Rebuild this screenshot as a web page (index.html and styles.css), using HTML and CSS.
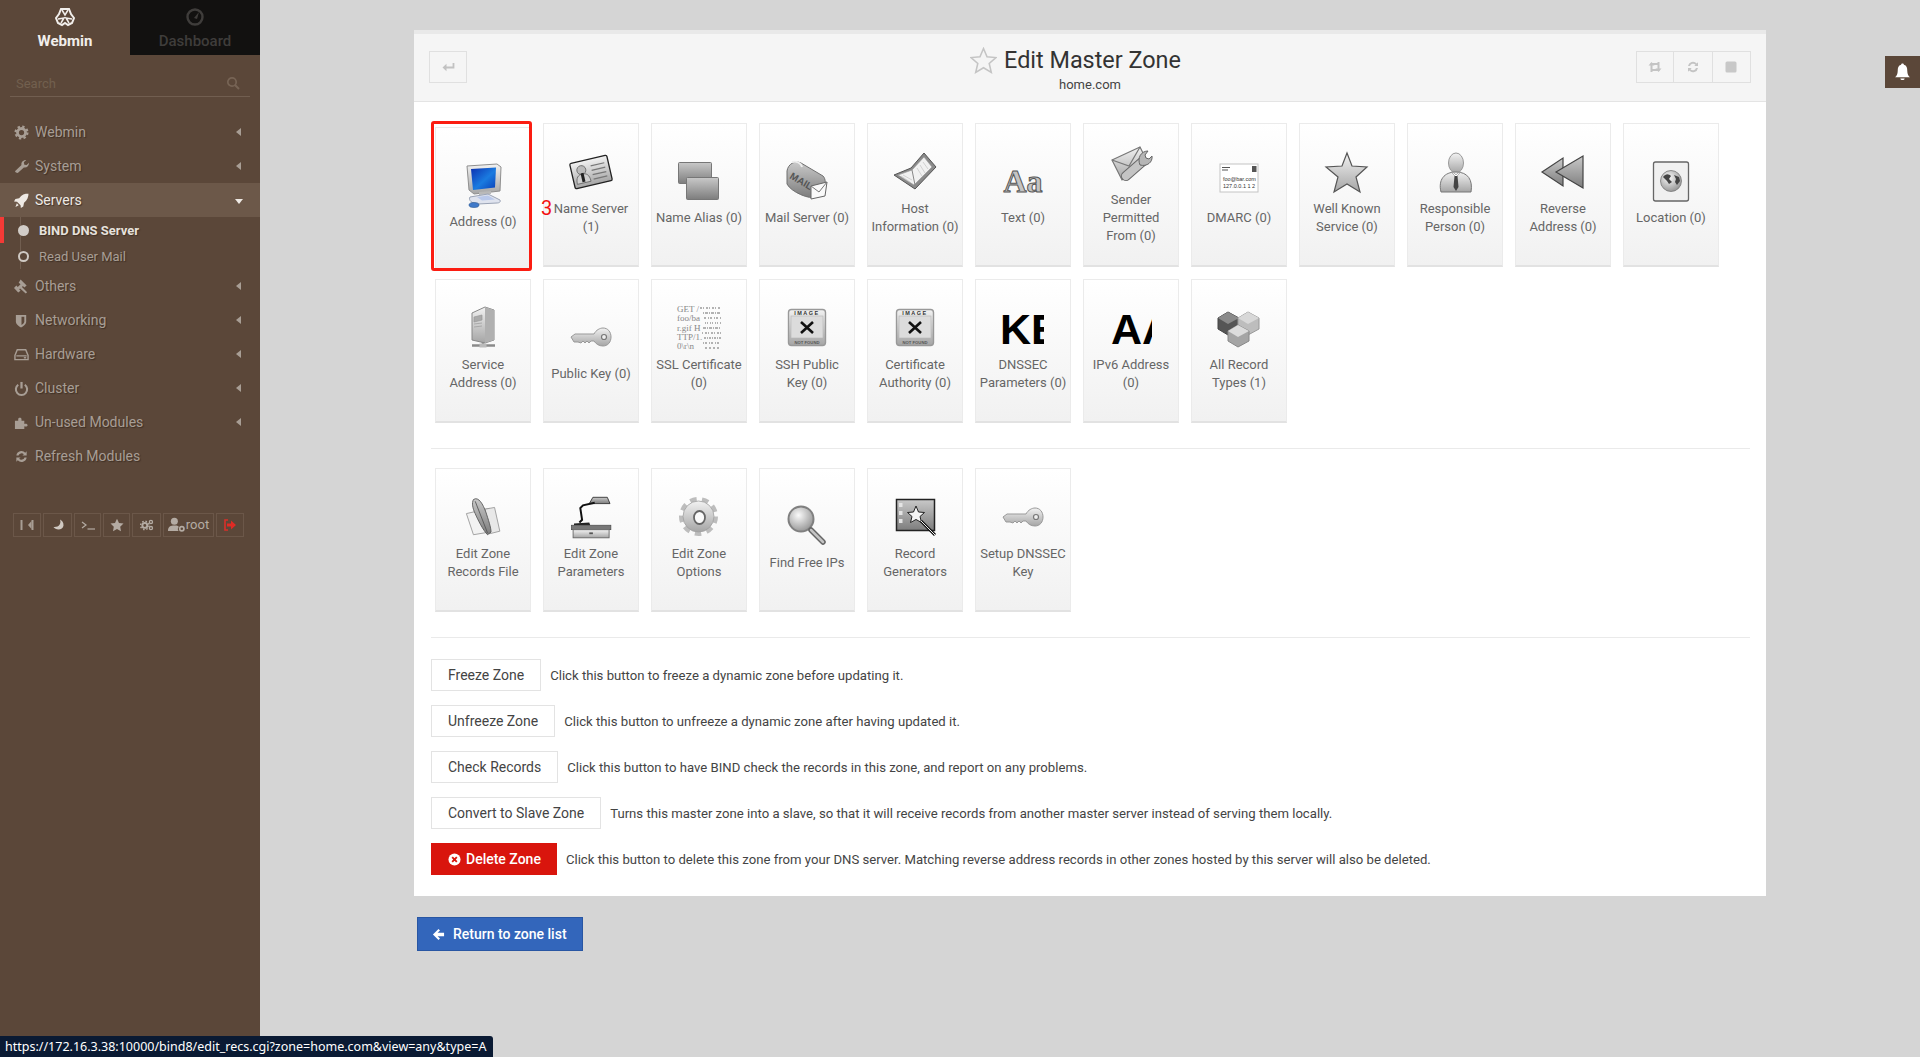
FILE: index.html
```html
<!DOCTYPE html>
<html lang="en">
<head>
<meta charset="utf-8">
<title>Edit Master Zone</title>
<link rel="stylesheet" href="styles.css">
</head>
<body>
<svg class="defs" aria-hidden="true">
  <defs>
    <linearGradient id="gl" x1="0" y1="0" x2="0" y2="1"><stop offset="0" stop-color="#f2f2f2"/><stop offset="1" stop-color="#a5a5a5"/></linearGradient>
    <linearGradient id="gm" x1="0" y1="0" x2="0" y2="1"><stop offset="0" stop-color="#c9c9c9"/><stop offset="1" stop-color="#7d7d7d"/></linearGradient>
    <linearGradient id="gd" x1="0" y1="0" x2="0" y2="1"><stop offset="0" stop-color="#777"/><stop offset="1" stop-color="#333"/></linearGradient>
    <linearGradient id="gb" x1="0" y1="0" x2="1" y2="1"><stop offset="0" stop-color="#0c2fb0"/><stop offset=".55" stop-color="#1a7be0"/><stop offset="1" stop-color="#0a3fb8"/></linearGradient>
    <radialGradient id="gg" cx=".4" cy=".35" r=".75"><stop offset="0" stop-color="#fafafa"/><stop offset="1" stop-color="#8a8a8a"/></radialGradient>
    <clipPath id="clip41"><rect x="0" y="0" width="45" height="48"/></clipPath>
    <symbol id="i-key" viewBox="0 0 48 48"><path d="M4 24l4-3h19c2-4 6-6 9-6 5 0 8 4 8 9s-3 9-8 9c-4 0-7-2-9-5h-3l-2 2-2-2-2 2-2-2-2 2-3-1-4 0z" fill="url(#gl)" stroke="#999"/><circle cx="37" cy="24" r="2.500" fill="#eee" stroke="#777" stroke-width="1.200"/></symbol>
    <symbol id="i-nf" viewBox="0 0 48 48"><rect x="5.500" y="5.500" width="37" height="36" rx="3" fill="url(#gl)" stroke="#999" stroke-width="1.400"/><rect x="8" y="12" width="32" height="22" fill="#dcdcdc" stroke="#b5b5b5" stroke-width=".6"/><text class="nft nft-top" x="24" y="10.500">IMAGE</text><path d="M18 18l12 11M30 18l-12 11" stroke="#111" stroke-width="2.600"/><text class="nft" x="24" y="39.500">NOT FOUND</text></symbol>
  </defs>
</svg>
<div class="layout">
  <aside class="sidebar">
    <div class="tabs">
      <div class="tab tab-on">
        <svg class="tab-ico" viewBox="0 0 20 20"><path d="M6 2h8l2 5 3 4-2 5-4 2-3-2-3 2-4-2-2-5 3-4z" fill="none" stroke="#f1eeeb" stroke-width="2"/><path d="M7 3l3 5 3-5M3 12l6-1-3 5M17 12l-6-1 3 5" fill="none" stroke="#f1eeeb" stroke-width="1.500"/></svg>
        <span>Webmin</span>
      </div>
      <div class="tab tab-off">
        <svg class="tab-ico" viewBox="0 0 20 20"><circle cx="10" cy="10" r="7.500" fill="none" stroke="#3f3d3b" stroke-width="2.400"/><path d="M9 11l5-6-2 7z" fill="#3f3d3b"/></svg>
        <span>Dashboard</span>
      </div>
    </div>
    <div class="search"><span>Search</span><svg class="search-ico" viewBox="0 0 14 14"><circle cx="6" cy="6" r="4.200" fill="none" stroke="#776455" stroke-width="1.700"/><path d="M9 9l4 4" stroke="#776455" stroke-width="2"/></svg></div>
    <nav class="menu">
      <div class="mi"><svg class="mi-ico" viewBox="0 0 16 16"><circle cx="8" cy="8" r="4.300" fill="none" stroke="#a89e95" stroke-width="3"/><circle cx="8" cy="8" r="6.300" fill="none" stroke="#a89e95" stroke-width="2.400" stroke-dasharray="2.500 2.450"/></svg><span class="mi-t">Webmin</span><i class="arr"></i></div>
      <div class="mi"><svg class="mi-ico" viewBox="0 0 16 16"><path d="M2 14.500l-1-1.500 7-6.500c-.7-3 1.500-5.500 5-5.500l-2.500 2.500.5 2.500 2.500.5L16 4c0 3.500-2.500 5.700-5.500 5l-6.500 6z" fill="#a89e95"/></svg><span class="mi-t">System</span><i class="arr"></i></div>
      <div class="mi mi-open"><svg class="mi-ico" viewBox="0 0 16 16"><path d="M15.500.5c-4 0-7.500 1.500-10 5l-4 .8L0 9l3.200.2L7 13l.3 3 2.600-1.600.8-4c3.400-2.500 4.900-6.400 4.800-10.400z" fill="#eee9e4"/><path d="M3 11l2 2-3.500 2z" fill="#eee9e4"/></svg><span class="mi-t">Servers</span><i class="arr-d"></i></div>
      <div class="sub">
        <div class="si si-on"><i class="dot-on"></i><span>BIND DNS Server</span></div>
        <div class="si"><i class="dot"></i><span>Read User Mail</span></div>
      </div>
      <div class="mi"><svg class="mi-ico" viewBox="0 0 16 16"><path d="M7 .5l6.500 6.500-2.500 2-1.500-1.500-1 1 5.500 5.500-1.500 1.500L6.500 10l-1 1L7 12.500l-2.500 2L0 9.500 2.500 7l1.500 1.500 3-3L5 4z" fill="#a89e95"/></svg><span class="mi-t">Others</span><i class="arr"></i></div>
      <div class="mi"><svg class="mi-ico" viewBox="0 0 16 16"><path d="M2 2h11v7c0 3-3 5-5.500 6.500C5 14 2 12 2 9z" fill="#a89e95"/><path d="M8 4h3v5c0 1.500-1.500 2.800-3 3.700z" fill="#5b4739"/></svg><span class="mi-t">Networking</span><i class="arr"></i></div>
      <div class="mi"><svg class="mi-ico" viewBox="0 0 16 16"><path d="M3.500 3h9l2.500 6v4.500H1V9z M2.500 9.500h11" fill="none" stroke="#a89e95" stroke-width="1.500"/><path d="M10.500 11.500h2.500" stroke="#a89e95" stroke-width="1.500"/></svg><span class="mi-t">Hardware</span><i class="arr"></i></div>
      <div class="mi"><svg class="mi-ico" viewBox="0 0 16 16"><path d="M4.500 4a6 6 0 1 0 7 0" fill="none" stroke="#a89e95" stroke-width="2.200"/><path d="M8 1v7" stroke="#a89e95" stroke-width="2.400"/></svg><span class="mi-t">Cluster</span><i class="arr"></i></div>
      <div class="mi"><svg class="mi-ico" viewBox="0 0 16 16"><path d="M1 6h3.500V4.500c0-2 3.500-2 3.500 0V6h3v3.500c2-.8 3.500.2 3.500 1.300s-1.500 2-3.500 1.200V15H1z" fill="#a89e95"/></svg><span class="mi-t">Un-used Modules</span><i class="arr"></i></div>
      <div class="mi"><svg class="mi-ico" viewBox="0 0 16 16"><path d="M2.500 7a5.500 5.500 0 0 1 9.500-3l1.500-1.500V7H9l1.500-1.500A3.500 3.500 0 0 0 4.800 7zM13.500 9a5.500 5.500 0 0 1-9.500 3l-1.500 1.500V9H7l-1.500 1.500A3.500 3.500 0 0 0 11.200 9z" fill="#a89e95"/></svg><span class="mi-t">Refresh Modules</span></div>
    </nav>
    <div class="tools">
      <div class="tool"><svg class="tool-ico" viewBox="0 0 14 14"><path d="M1.500 2v10" stroke="#a89e95" stroke-width="2"/><path d="M8 7l3.500-4v8z" fill="#a89e95"/><path d="M12.500 2v10" stroke="#a89e95" stroke-width="2"/></svg></div>
      <div class="tool"><svg class="tool-ico" viewBox="0 0 14 14"><path d="M9 1.500c1.500 4-1 8-6.500 7.500 2 3.500 9.500 3.500 10-1.500C12.800 4.500 11 2.500 9 1.500z" fill="#d0c9c2"/></svg></div>
      <div class="tool"><svg class="tool-ico" viewBox="0 0 14 14"><path d="M1 4l4 3-4 3" fill="none" stroke="#b4aba3" stroke-width="1.200"/><path d="M6.500 11H14" stroke="#b4aba3" stroke-width="1.200"/></svg></div>
      <div class="tool"><svg class="tool-ico" viewBox="0 0 14 14"><path d="M7 .8l2 4.200 4.500.6-3.300 3.100.8 4.500L7 11l-4 2.200.8-4.500L.5 5.600 5 5z" fill="#b4aba3"/></svg></div>
      <div class="tool"><svg class="tool-ico" viewBox="0 0 16 14"><circle cx="5.500" cy="7.500" r="2.800" fill="none" stroke="#b4aba3" stroke-width="2.200"/><circle cx="5.500" cy="7.500" r="4.800" fill="none" stroke="#b4aba3" stroke-width="1.600" stroke-dasharray="1.800 2"/><circle cx="12.500" cy="3.500" r="1.800" fill="none" stroke="#b4aba3" stroke-width="1.500"/><circle cx="12.500" cy="10.500" r="1.800" fill="none" stroke="#b4aba3" stroke-width="1.500"/></svg></div>
      <div class="tool tool-user"><svg class="tool-ico tool-ico-u" viewBox="0 0 16 14"><circle cx="6" cy="4" r="3.300" fill="#b4aba3"/><path d="M0 13c0-4 2.500-5 6-5s4 .5 4 1.500c-1 1-1 2.500 0 3.500z" fill="#b4aba3"/><circle cx="13" cy="11" r="2" fill="none" stroke="#b4aba3" stroke-width="1.600"/></svg><span>root</span></div>
      <div class="tool"><svg class="tool-ico" viewBox="0 0 14 14"><path d="M5 2H2v10h3" fill="none" stroke="#d8302a" stroke-width="1.600"/><path d="M4 5.500h4V2.500L13 7l-5 4.500v-3H4z" fill="#e02a24"/></svg></div>
    </div>
  </aside>

  <main class="main">
    <section class="card">
      <header class="head">
        <div class="hbtns"><div class="hb hb-back"><svg class="hb-ico" viewBox="0 0 14 14"><path d="M12.500 3v4.500H3" fill="none" stroke="#c2c2c2" stroke-width="1.800"/><path d="M5.500 3.800L1.500 7.500l4 3.700z" fill="#c2c2c2"/></svg></div></div>
        <div class="htitle">
          <h1><svg class="star" viewBox="0 0 26 26"><path d="M13 1.500l3.400 8 8.600.7-6.500 5.700 2 8.500L13 20l-7.500 4.400 2-8.500L1 10.200l8.600-.7z" fill="#f4f4f4" stroke="#c4c4c4" stroke-width="1.500"/></svg>Edit Master Zone</h1>
          <p>home.com</p>
        </div>
        <div class="hbtns hbtns-r">
          <div class="hb"><svg class="hb-ico" viewBox="0 0 14 14"><path d="M3.500 12V4h6M10.500 2v8h-6" fill="none" stroke="#c4c4c4" stroke-width="2"/><path d="M0.500 5.500l3-3.500 3 3.500zM7.500 8.500l3 3.500 3-3.500z" fill="#c4c4c4"/></svg></div>
          <div class="hb"><svg class="hb-ico" viewBox="0 0 14 14"><path d="M2 6a5 5 0 0 1 8.700-2.500L12 2.200V6H8.300l1.200-1.300A3.300 3.300 0 0 0 4 6zM12 8a5 5 0 0 1-8.700 2.500L2 11.800V8h3.700l-1.200 1.300A3.300 3.300 0 0 0 10 8z" fill="#c4c4c4"/></svg></div>
          <div class="hb"><svg class="hb-ico" viewBox="0 0 14 14"><rect x="1.500" y="1.500" width="11" height="11" rx="1.500" fill="#c8c8c8"/></svg></div>
        </div>
      </header>

      <div class="body">
        <div class="tiles">
          <a class="tile tile-hover"><i class="redbox"></i>
            <svg class="ico" viewBox="0 0 48 48"><path d="M8 5l30-2 4 3-1 24-26 3-5-4z" fill="url(#gl)" stroke="#8f8f8f"/><path d="M12 8l25-1.500-1 20-22 2.500z" fill="url(#gb)"/><path d="M20 31l12-1v3l-12 1z" fill="#b9b9b9"/><path d="M11 36l18-3 12 6c1 2-1 3-3 3l-19 1c-6 0-10-4-8-7z" fill="#dfe3ee" stroke="#9aa3b5"/><path d="M18 36l11-1.500 7 4-13 1z" fill="#b9c8ea"/><ellipse cx="15" cy="44" rx="5" ry="2.500" fill="#3f79c9" stroke="#24528f" stroke-width=".6"/></svg>
            <span class="lbl">Address (0)</span></a>
          <a class="tile"><i class="three">3</i>
            <svg class="ico" viewBox="0 0 48 48"><g transform="rotate(-13 24 24)"><rect x="5" y="11" width="38" height="26" rx="1.500" fill="url(#gl)" stroke="#222" stroke-width="1.300"/><circle cx="15" cy="20" r="4.500" fill="#bbb" stroke="#666" stroke-width=".8"/><path d="M8 33c0-7 3-9 7-9s7 2 7 9z" fill="#d0d0d0" stroke="#666" stroke-width=".8"/><rect x="13.500" y="23" width="3" height="9" fill="#222"/><path d="M25 18h14M25 22.500h14M25 27h14M25 31.500h14" stroke="#777" stroke-width="1.200"/></g></svg>
            <span class="lbl">Name Server (1)</span></a>
          <a class="tile">
            <svg class="ico" viewBox="0 0 48 48"><rect x="3.500" y="5.500" width="33" height="21" rx="1" fill="url(#gm)" stroke="#777"/><rect x="11.500" y="20.500" width="32" height="22" rx="1" fill="url(#gm)" stroke="#777"/></svg>
            <span class="lbl">Name Alias (0)</span></a>
          <a class="tile">
            <svg class="ico" viewBox="0 0 48 48"><path d="M4 14c1-7 8-11 14-8l22 13c3 3 3 9 0 13l-7 8c-6 3-25-5-29-13z" fill="url(#gm)" stroke="#707070"/><path d="M9 5c5-1 9 1 10 5" fill="none" stroke="#eee" stroke-width="2"/><text class="mailtxt" x="6" y="21" transform="rotate(30 6 21)">MAIL</text><path d="M28 29l16-4-2 14-14 3z" fill="#fafafa" stroke="#666"/><path d="M28 29l8 6 8-10" fill="none" stroke="#777"/></svg>
            <span class="lbl">Mail Server (0)</span></a>
          <a class="tile">
            <svg class="ico" viewBox="0 0 48 48"><path d="M3 27L20 20 33 5l12 14-21 22z" fill="#8a8a8a" stroke="#555"/><path d="M7 27l14-5L33 9l8 10-18 18z" fill="#f1f1f1" stroke="#999" stroke-width=".7"/><path d="M21 22l3 15" stroke="#888"/><path d="M26 20l5 8M29 17l5 8M32 14l5 7M12 27l9 5M10 28l9 6" stroke="#c9c9c9" stroke-width=".8"/></svg>
            <span class="lbl">Host Information (0)</span></a>
          <a class="tile">
            <svg class="ico" viewBox="0 0 48 48"><text class="aatxt" x="24" y="35">Aa</text></svg>
            <span class="lbl">Text (0)</span></a>
          <a class="tile">
            <svg class="ico" viewBox="0 0 48 48"><path d="M5 21L33 8l8 16-26 17z" fill="url(#gl)" stroke="#777" stroke-width="1.200"/><path d="M5 21l17 6L33 8" fill="none" stroke="#777" stroke-width="1.200"/><path d="M19 37l16-14" stroke="#666" stroke-width="10" stroke-linecap="round"/><path d="M19 37l16-14" stroke="#c4c4c4" stroke-width="8" stroke-linecap="round"/><path d="M33 26c-3-7 1-14 8-14l-3 4 1 3 3 1 3-3c1 6-5 11-12 9z" fill="#b5b5b5" stroke="#666"/></svg>
            <span class="lbl">Sender Permitted From (0)</span></a>
          <a class="tile">
            <svg class="ico" viewBox="0 0 48 48"><rect x="5" y="7" width="38" height="28" fill="#fff" stroke="#c4c4c4"/><rect x="37" y="9" width="4.500" height="6" fill="#555"/><path d="M7 10.500h8M7 13h6" stroke="#555"/><text class="dm1" x="8" y="24">foo@bar.com</text><text class="dm1" x="8" y="31">127.0.0.1 1 2</text></svg>
            <span class="lbl">DMARC (0)</span></a>
          <a class="tile">
            <svg class="ico" viewBox="0 0 48 48"><path d="M24 5l5 13 15 1-11 10 4 15-13-8-13 8 4-15L3 19l16-1z" fill="url(#gl)" stroke="#555" stroke-width="1.200"/></svg>
            <span class="lbl">Well Known Service (0)</span></a>
          <a class="tile">
            <svg class="ico" viewBox="0 0 48 48"><ellipse cx="25" cy="15" rx="7.500" ry="10" fill="url(#gl)" stroke="#999"/><path d="M10 44c-3-12 3-20 15-20s17 8 15 20z" fill="url(#gl)" stroke="#777"/><path d="M20 24l5 5 5-5-3 1-2 2-2-2z" fill="#fff" stroke="#888" stroke-width=".6"/><path d="M23.500 28h3l1 11-2.500 4-2.500-4z" fill="#444"/></svg>
            <span class="lbl">Responsible Person (0)</span></a>
          <a class="tile">
            <svg class="ico" viewBox="0 0 48 48"><path d="M3 24L24 10v28z" fill="url(#gm)" stroke="#444" stroke-width="1.200"/><path d="M17 24L44 8v32z" fill="url(#gm)" stroke="#444" stroke-width="1.200"/></svg>
            <span class="lbl">Reverse Address (0)</span></a>
          <a class="tile">
            <svg class="ico" viewBox="0 0 48 48"><rect x="6.500" y="5" width="35" height="39" rx="2" fill="#f0f0f0" stroke="#666" stroke-width="1.300"/><circle cx="24" cy="24" r="10.500" fill="url(#gg)" stroke="#777" stroke-width=".8"/><path d="M16 20c3-4 6-3 8-1l-2 3 3 3-3 2-2-3zM27 18l5 2 1 4-3 4-2-3 1-3z" fill="#444"/></svg>
            <span class="lbl">Location (0)</span></a>

          <a class="tile">
            <svg class="ico" viewBox="0 0 48 48"><path d="M13 9l13-6 9 3v30l-9 3-13-3z" fill="url(#gl)" stroke="#888"/><path d="M26 3l9 3v30l-9 3z" fill="#b0b0b0"/><path d="M15 13l8-2v5l-8 2zM15 20l8-1M15 23l8-1" fill="#aaa" stroke="#999" stroke-width=".7"/><path d="M13 41.500h23M24 38v4" stroke="#8a8a8a" stroke-width="2.500"/><rect x="20.500" y="39.500" width="7" height="4" fill="#bbb"/></svg>
            <span class="lbl">Service Address (0)</span></a>
          <a class="tile">
            <svg class="ico"><use href="#i-key"/></svg>
            <span class="lbl">Public Key (0)</span></a>
          <a class="tile">
            <svg class="ico" viewBox="0 0 48 48"><g class="ssl"><text x="2" y="8">GET /</text><text x="2" y="17">foo/ba</text><text x="2" y="26.500">r.gif H</text><text x="2" y="36">TTP/1.</text><text x="2" y="45">0\r\n</text></g><g fill="none" stroke="#9a9a9a" stroke-width="1.500"><path d="M25 4h21" stroke-dasharray="2 1 1 2"/><path d="M28 9h18" stroke-dasharray="1 1 3 1"/><path d="M29 14h17" stroke-dasharray="2 2 1 1"/><path d="M30 19h16" stroke-dasharray="1 1 1 2"/><path d="M28 24h18" stroke-dasharray="3 1 1 1"/><path d="M27 29h19" stroke-dasharray="1 2 2 1"/><path d="M29 34h17" stroke-dasharray="2 1 1 1"/><path d="M28 39h18" stroke-dasharray="1 1 2 2"/><path d="M30 44h16" stroke-dasharray="2 2"/></g></svg>
            <span class="lbl">SSL Certificate (0)</span></a>
          <a class="tile">
            <svg class="ico"><use href="#i-nf"/></svg>
            <span class="lbl">SSH Public<br>Key (0)</span></a>
          <a class="tile">
            <svg class="ico"><use href="#i-nf"/></svg>
            <span class="lbl">Certificate Authority (0)</span></a>
          <a class="tile">
            <svg class="ico" viewBox="0 0 48 48"><g clip-path="url(#clip41)"><text class="big" x="1" y="40">KE</text></g></svg>
            <span class="lbl">DNSSEC Parameters (0)</span></a>
          <a class="tile">
            <svg class="ico" viewBox="0 0 48 48"><g clip-path="url(#clip41)"><text class="big" x="4" y="40">AA</text></g></svg>
            <span class="lbl">IPv6 Address (0)</span></a>
          <a class="tile">
            <svg class="ico" viewBox="0 0 48 48"><path d="M13 8l11 6v11l-11 6-10-6V14z" fill="#555" stroke="#444"/><path d="M13 8l11 6-11 6-10-6z" fill="#8a8a8a"/><path d="M33 8l11 6v11l-11 6-10-6V14z" fill="#bdbdbd" stroke="#999"/><path d="M33 8l11 6-11 6-10-6z" fill="#d8d8d8"/><path d="M23 21l11 6v10l-11 6-10-6V27z" fill="#a5a5a5" stroke="#888"/><path d="M23 21l11 6-11 6-10-6z" fill="#dcdcdc"/></svg>
            <span class="lbl">All Record Types (1)</span></a>
        </div>
        <hr class="rule rule-a">
        <div class="tiles">
          <a class="tile">
            <svg class="ico" viewBox="0 0 48 48"><g transform="translate(3 3) scale(.88)"><path d="M5 20l26-6 6 26-24 4z" fill="#f2f2f2" stroke="#999"/><path d="M26 15l11-2 6 27-12 3z" fill="#e8e8e8" stroke="#999"/><path d="M13 4c6-4 11 6 14 14 3 9 6 18 6 23l-4 3C24 39 18 27 15 20c-3-6-4-12-2-16z" fill="url(#gm)" stroke="#555"/><path d="M15 6l14 36" stroke="#555"/></g></svg>
            <span class="lbl">Edit Zone Records File</span></a>
          <a class="tile">
            <svg class="ico" viewBox="0 0 48 48"><g transform="translate(2.500 2.500) scale(.9)"><path d="M26 2h16l3 7H22z" fill="url(#gm)" stroke="#333"/><path d="M28 8l-13 3-3 3 2 13-3 3" fill="none" stroke="#111" stroke-width="2.200"/><path d="M5 31l17-1 1 3H5z" fill="#222"/><rect x="2" y="33" width="44" height="5" fill="#777" stroke="#444" stroke-width=".7"/><rect x="4" y="38" width="40" height="9" fill="url(#gl)" stroke="#666"/><rect x="22" y="41" width="4" height="2" fill="#555"/></g></svg>
            <span class="lbl">Edit Zone Parameters</span></a>
          <a class="tile">
            <svg class="ico" viewBox="0 0 48 48"><circle cx="23.500" cy="23.500" r="17" fill="none" stroke="#bdbdbd" stroke-width="5" stroke-dasharray="6.500 5.370"/><circle cx="23.500" cy="23.500" r="15.500" fill="url(#gl)" stroke="#a0a0a0" stroke-width=".8"/><ellipse cx="24.500" cy="24.500" rx="5.500" ry="6.500" fill="#fafafa" stroke="#666" stroke-width="1.800"/></svg>
            <span class="lbl">Edit Zone Options</span></a>
          <a class="tile">
            <svg class="ico" viewBox="0 0 48 48"><circle cx="18" cy="17" r="12.500" fill="url(#gg)" stroke="#808080" stroke-width="2"/><path d="M28 28l12 12" stroke="#666" stroke-width="5.500" stroke-linecap="round"/><path d="M28 28l12 12" stroke="#c4c4c4" stroke-width="2.500" stroke-linecap="round"/></svg>
            <span class="lbl">Find Free IPs</span></a>
          <a class="tile">
            <svg class="ico" viewBox="0 0 48 48"><rect x="5.500" y="6.500" width="38" height="31" fill="url(#gm)" stroke="#222" stroke-width="1.500"/><path d="M8 10h3.500v4H8zM8 18h3.500v4H8zM8 26h3.500v4H8z" fill="#e4e4e4"/><path d="M25 13l2.500 6 6 .5-4.500 4 1.500 6-5.500-3-5.500 3 1.500-6-4.500-4 6-.5z" fill="#f5f5f5" stroke="#222"/><path d="M30 28l14 14" stroke="#111" stroke-width="3"/><path d="M30 28l14 14" stroke="#eee" stroke-width="1"/></svg>
            <span class="lbl">Record Generators</span></a>
          <a class="tile">
            <svg class="ico"><use href="#i-key"/></svg>
            <span class="lbl">Setup DNSSEC Key</span></a>
        </div>
        <hr class="rule rule-b">
        <div class="actions">
          <div class="act"><button class="btn">Freeze Zone</button><span class="desc">Click this button to freeze a dynamic zone before updating it.</span></div>
          <div class="act"><button class="btn">Unfreeze Zone</button><span class="desc">Click this button to unfreeze a dynamic zone after having updated it.</span></div>
          <div class="act"><button class="btn">Check Records</button><span class="desc">Click this button to have BIND check the records in this zone, and report on any problems.</span></div>
          <div class="act"><button class="btn">Convert to Slave Zone</button><span class="desc">Turns this master zone into a slave, so that it will receive records from another master server instead of serving them locally.</span></div>
          <div class="act"><button class="btn btn-del"><svg class="btn-ico" viewBox="0 0 14 14"><circle cx="7" cy="7" r="6.500" fill="#fff"/><path d="M4.500 4.500l5 5M9.500 4.500l-5 5" stroke="#d9150d" stroke-width="2"/></svg>Delete Zone</button><span class="desc">Click this button to delete this zone from your DNS server. Matching reverse address records in other zones hosted by this server will also be deleted.</span></div>
        </div>
      </div>
    </section>
    <button class="btn-ret"><svg class="btn-ico-l" viewBox="0 0 14 14"><path d="M7 1L1 7l6 6 1.600-1.600L6 9h7V5H6l2.600-2.400z" fill="#fff"/></svg>Return to zone list</button>
  </main>
</div>
<div class="bell"><svg class="bell-ico" viewBox="0 0 16 18"><path d="M8 1c1 0 1.300.6 1.300 1.200C12 3 12.500 5 12.500 8c0 3 1 4.500 2.500 6H1c1.500-1.500 2.500-3 2.500-6 0-3 .5-5 3.200-5.800C6.700 1.600 7 1 8 1z" fill="#fff"/><path d="M6 15h4c0 2-4 2-4 0z" fill="#fff"/></svg></div>
<div class="status">https://172.16.3.38:10000/bind8/edit_recs.cgi?zone=home.com&amp;view=any&amp;type=A</div>
</body>
</html>
```
FILE: styles.css
```css
* { box-sizing: border-box; }
html, body { margin: 0; height: 1057px; overflow: hidden; }
body { background: #d5d5d5; font-family: Roboto, "Liberation Sans", sans-serif; color: #333; }
.defs { display: block; width: 0; height: 0; }
.layout { display: flex; height: 1057px; }

.sidebar { width: 260px; flex: none; background: #5b4739; display: flex; flex-direction: column; }
.tabs { display: flex; height: 55px; }
.tab { width: 130px; display: flex; flex-direction: column; align-items: center; font-size: 15px; font-weight: 700; padding-top: 7px; }
.tab-ico { width: 20px; height: 20px; margin-bottom: 5px; }
.tab-on { color: #f1eeeb; }
.tab-off { background: #121110; color: #3f3d3b; font-weight: 500; }
.search { height: 42px; margin: 0 10px; padding: 0 10px 5px 6px; border-bottom: 1px solid #715e50; display: flex; justify-content: space-between; align-items: flex-end; font-size: 13px; color: #72604f; }
.search-ico { width: 14px; height: 14px; margin-bottom: 1px; }
.menu { margin-top: 18px; }
.mi { height: 34px; display: flex; align-items: center; padding: 0 14px; font-size: 14px; color: #a89e95; text-shadow: 1px 1px 1px #3f3025; }
.mi-ico { width: 15px; height: 15px; flex: none; margin-right: 6px; }
.mi-t { flex: 1; }
.mi-open { background: #6c5849; color: #eee9e4; }
.arr { width: 0; height: 0; border-style: solid; border-width: 4px 5px 4px 0; border-color: transparent #a89e95 transparent transparent; margin-right: 5px; }
.arr-d { width: 0; height: 0; border-style: solid; border-width: 5px 4px 0; border-color: #eee9e4 transparent transparent; margin-right: 3px; margin-top: 2px; }
.sub { position: relative; height: 52px; }
.sub::before { content: ""; position: absolute; left: 20px; top: 0; bottom: 0; width: 1px; background: #715e50; }
.si { height: 26px; display: flex; align-items: center; font-size: 13px; color: #a89e95; text-shadow: 1px 1px 1px #3f3025; position: relative; padding-left: 18px; }
.si-on { color: #e6e1dc; font-weight: 700; }
.si-on::before { content: ""; position: absolute; left: 0; top: 0; width: 4px; height: 26px; background: #f43a36; }
.dot-on, .dot { width: 11px; height: 11px; border-radius: 50%; margin-right: 10px; flex: none; position: relative; }
.dot-on { background: #d2cdc8; }
.dot { border: 2px solid #cfc9c3; background: #5b4739; }
.tools { display: grid; grid-template-columns: 28px 29px 27px 27px 29px 51px 28px; gap: 2px; height: 24px; margin: 40px 0 0 13px; }
.tool { border: 1px solid #6b5749; display: flex; align-items: center; justify-content: center; color: #b4aba3; font-size: 13px; padding-bottom: 1px; }
.tool-ico { width: 14px; height: 14px; }
.tool-ico-u { width: 17px; height: 15px; }
.tool-user { gap: 1px; padding-bottom: 2px; }

.main { flex: 1; padding: 30px 154px 0; }
.card { background: #fff; border-top: 4px solid #e9e9e9; height: 866px; display: flex; flex-direction: column; }
.head { height: 68px; background: #f5f5f5; border-bottom: 1px solid #e4e4e4; display: grid; grid-template-columns: 1fr auto 1fr; padding: 17px 15px 0; }
.hbtns { display: flex; height: 32px; }
.hb { width: 38px; border: 1px solid #e0e0e0; display: flex; align-items: center; justify-content: center; }
.hbtns-r { justify-self: end; }
.hbtns-r .hb { width: 38.400px; }
.hbtns-r .hb + .hb { border-left: none; }
.hb-ico { width: 14px; height: 14px; }
.htitle { text-align: center; margin-top: -8px; }
.htitle h1 { margin: 0; padding-left: 5px; font-size: 23.400px; font-weight: 400; line-height: 34px; color: #333; display: flex; align-items: center; justify-content: center; }
.star { width: 27px; height: 27px; margin: 0 7px 0 -34px; flex: none; }
.htitle p { margin: -1px 0 0; font-size: 13px; line-height: 18px; color: #444; }

.body { padding: 21px 16px 21px 17px; flex: 1; }
.tiles { display: flex; flex-wrap: wrap; gap: 12px; margin-left: 4px; }
.tile { width: 96px; height: 144px; border: 1px solid #ebebeb; border-bottom: 2px solid #e2e2e2; background: linear-gradient(#fff, #f1f1f1); display: flex; flex-direction: column; align-items: center; justify-content: center; padding-bottom: 6px; text-align: center; position: relative; color: #666; }
.tile-hover { transform: translateY(4px); }
.redbox { position: absolute; left: -5px; top: -7px; width: 101px; height: 150px; border: 3px solid #fb1d12; border-radius: 3px; }
.three { position: absolute; left: -3px; top: 73px; font-style: normal; font-size: 20px; line-height: 22px; color: #f31111; font-weight: 400; }
.ico { width: 48px; height: 48px; flex: none; margin-bottom: 4px; overflow: hidden; }
.lbl { font-size: 13px; line-height: 18px; padding: 0 3px; }
.mailtxt { font: 700 10px "Liberation Sans", sans-serif; fill: #555; }
.aatxt { font: 700 32px "Liberation Serif", serif; fill: #c4c4c4; stroke: #555; stroke-width: 1; text-anchor: middle; }
.dm1 { font: 5.500px "Liberation Sans", sans-serif; fill: #333; }
.ssl text { font: 9px "Liberation Serif", serif; fill: #888; }
.big { font: 700 43px "Liberation Sans", sans-serif; fill: #000; }
.nft { font: 700 4.200px "Liberation Sans", sans-serif; fill: #555; text-anchor: middle; }
.nft-top { font-size: 5.500px; fill: #333; letter-spacing: 1.500px; }

.rule { border: 0; border-top: 1px solid #eaeaea; margin: 0; }
.rule-a { margin: 25px 0 19px; }
.rule-b { margin: 25px 0 21px; }
.actions { display: flex; flex-direction: column; gap: 14px; }
.act { display: flex; align-items: center; height: 32px; }
.btn { height: 32px; padding: 0 16px; border: 1px solid #e3e3e3; background: #fff; color: #444; font: 400 14px Roboto, sans-serif; margin-right: 9px; display: flex; align-items: center; white-space: nowrap; }
.btn-del { background: #d9150d; border-color: #d9150d; color: #fff; font-weight: 500; padding-right: 15px; }
.btn-ico { width: 13px; height: 13px; margin-right: 5px; }
.desc { font-size: 13.150px; color: #444; white-space: nowrap; }
.btn-ret { display: flex; align-items: center; height: 34px; width: 166px; margin: 21px 0 0 3px; padding: 0 14px; background: #3366bb; border: 1px solid #2856a3; color: #fff; font: 500 14px Roboto, sans-serif; white-space: nowrap; }
.btn-ico-l { width: 13px; height: 13px; margin-right: 8px; }

.bell { position: fixed; right: 0; top: 56px; width: 35px; height: 32px; background: #5b4739; display: flex; align-items: center; justify-content: center; }
.bell-ico { width: 17px; height: 20px; }
.status { position: fixed; left: 0; bottom: 0; height: 21px; padding: 0 7px 0 5px; background: #0a1a33; color: #fff; font: 12.500px/21px "Noto Sans", sans-serif; border-top-right-radius: 3px; white-space: nowrap; }
```
